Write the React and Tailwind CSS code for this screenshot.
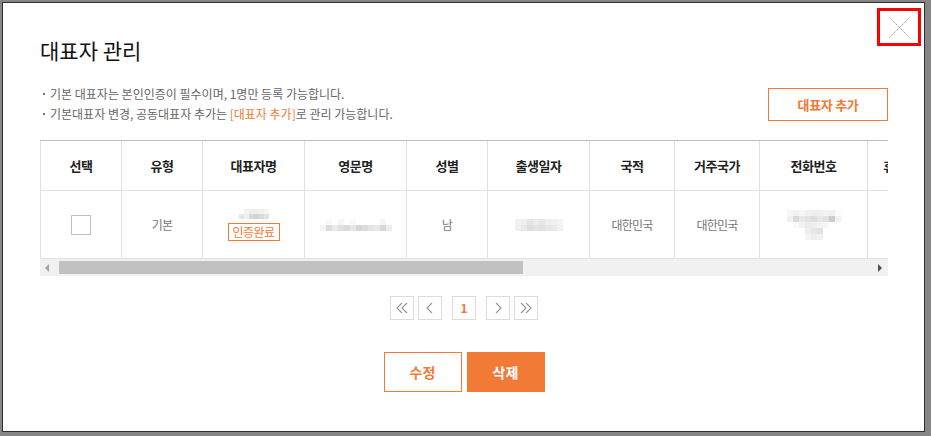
import React from 'react';

const FONT = { fontFamily: '"Noto Sans CJK KR", "Noto Sans", sans-serif' };

const COLUMNS = [
  { label: '선택', w: 'w-[81px]' },
  { label: '유형', w: 'w-[81px]' },
  { label: '대표자명', w: 'w-[102px]' },
  { label: '영문명', w: 'w-[102px]' },
  { label: '성별', w: 'w-[81px]' },
  { label: '출생일자', w: 'w-[102px]' },
  { label: '국적', w: 'w-[85px]' },
  { label: '거주국가', w: 'w-[85px]' },
  { label: '전화번호', w: 'w-[108px]' },
  { label: '휴대폰', w: 'w-[66px]' }
];

// 모자이크 처리된 개인정보 (픽셀 블록)
const Mosaic = ({ rows, size = 6 }) => (
  <div className="flex flex-col items-center">
    {rows.map((row, i) => (
      <div key={i} className="flex">
        {row.map((shade, j) => (
          <span key={j} style={{ width: size, height: size, background: shade }} />
        ))}
      </div>
    ))}
  </div>
);

const Chevron = ({ dir = 'left', double = false }) => (
  <svg width="14" height="14" viewBox="0 0 14 14" fill="none" stroke="#9a9a9a" strokeWidth="1.2">
    {dir === 'left' ? (
      <>
        <polyline points={double ? '7,2 2,7 7,12' : '9,2 4,7 9,12'} />
        {double && <polyline points="12,2 7,7 12,12" />}
      </>
    ) : (
      <>
        <polyline points={double ? '2,2 7,7 2,12' : '5,2 10,7 5,12'} />
        {double && <polyline points="7,2 12,7 7,12" />}
      </>
    )}
  </svg>
);

const PageBtn = ({ children, className = '' }) => (
  <button className={`flex h-[24px] w-[24px] items-center justify-center border border-[#dcdcdc] bg-white ${className}`}>
    {children}
  </button>
);

export default function App() {
  return (
    <div className="h-[436px] w-[931px] overflow-hidden bg-[#858585] pl-[2px] pt-[2px]" style={FONT}>
      <div className="relative h-[430px] w-[923px] border border-[#2f2f2f] bg-white pl-[37px] pr-[36px]">
        {/* 닫기 */}
        <div className="absolute right-[3px] top-[5px] flex h-[38px] w-[44px] items-center justify-center border-[3px] border-[#ff0000]">
          <svg width="21" height="21" viewBox="0 0 21 21" stroke="#a0a0a0" strokeWidth="1" strokeDasharray="1.5 0.8">
            <line x1="0.5" y1="0.5" x2="20.5" y2="20.5" />
            <line x1="20.5" y1="0.5" x2="0.5" y2="20.5" />
          </svg>
        </div>

        {/* Header */}
        <h1 className="mt-[32px] h-[30px] text-[21px] leading-[30px] font-normal text-[#111]">대표자 관리</h1>

        <div className="mt-[19px] flex items-start justify-between">
          <div className="text-[12px] leading-[20px] text-[#666]">
            <p className="flex items-center">
              <span className="ml-[3px] mr-[5px] inline-block h-[2px] w-[2px] bg-[#777]" />
              기본 대표자는 본인인증이 필수이며, 1명만 등록 가능합니다.
            </p>
            <p className="flex items-center">
              <span className="ml-[3px] mr-[5px] inline-block h-[2px] w-[2px] bg-[#777]" />
              기본대표자 변경, 공동대표자 추가는&nbsp;<span className="text-[#f17a36]">[대표자 추가]</span>로 관리 가능합니다.
            </p>
          </div>
          <button className="mt-[4px] h-[33px] w-[120px] border border-[#f17a36] bg-white text-[13px] font-bold tracking-[-0.3px] text-[#f17a36]">
            대표자 추가
          </button>
        </div>

        {/* Table */}
        <div className="mt-[16px] w-[848px] overflow-hidden border-t border-[#b9c0ca]">
          <div className="w-max border-l border-[#e2e2e2]">
            <div className="flex h-[50px] border-b border-[#e2e2e2]">
              {COLUMNS.map((c) => (
                <div
                  key={c.label}
                  className={`${c.w} flex shrink-0 items-center justify-center border-r border-[#e2e2e2] text-[13px] font-bold tracking-[-0.5px] text-[#222]`}
                >
                  {c.label}
                </div>
              ))}
            </div>
            <div className="flex h-[68px] border-b border-[#e2e2e2] text-[12px] tracking-[-0.75px] text-[#777]">
              <div className="flex w-[81px] shrink-0 items-center justify-center border-r border-[#e2e2e2]">
                <span className="h-[20px] w-[20px] border border-[#bcc1c9] bg-white" />
              </div>
              <div className="flex w-[81px] shrink-0 items-center justify-center border-r border-[#e2e2e2]">기본</div>
              <div className="flex w-[102px] shrink-0 flex-col items-center justify-center gap-[4px] border-r border-[#e2e2e2]">
                <Mosaic
                  size={5}
                  rows={[
                    ['#fff', '#f3f3f3', '#eee', '#eee', '#f0f0f0', '#f5f5f5'],
                    ['#e6e6e6', '#efefef', '#d8d8d8', '#d4d4d4', '#dadada', '#e2e2e2']
                  ]}
                />
                <span className="flex h-[18px] w-[52px] items-center justify-center border border-[#f17a36] text-[12px] tracking-[-0.5px] text-[#f17a36]">
                  인증완료
                </span>
              </div>
              <div className="flex w-[102px] shrink-0 items-center justify-center border-r border-[#e2e2e2]">
                <Mosaic
                  rows={[
                    ['#fff', '#fafafa', '#fff', '#f5f5f5', '#fff', '#fafafa', '#fff', '#fff', '#fff', '#fff', '#f5f5f5', '#fff'],
                    ['#f4f4f4', '#dcdcdc', '#eaeaea', '#e0e0e0', '#dadada', '#e6e6e6', '#d6d6d6', '#dcdcdc', '#e4e4e4', '#e8e8e8', '#d8d8d8', '#eeeeee']
                  ]}
                />
              </div>
              <div className="flex w-[81px] shrink-0 items-center justify-center border-r border-[#e2e2e2]">남</div>
              <div className="flex w-[102px] shrink-0 items-center justify-center border-r border-[#e2e2e2]">
                <Mosaic
                  rows={[
                    ['#f2f2f2', '#eeeeee', '#e4e4e4', '#ececec', '#e6e6e6', '#eeeeee', '#f0f0f0', '#f4f4f4'],
                    ['#f0f0f0', '#e8e8e8', '#dedede', '#e2e2e2', '#e0e0e0', '#e6e6e6', '#eaeaea', '#f2f2f2']
                  ]}
                />
              </div>
              <div className="flex w-[85px] shrink-0 items-center justify-center border-r border-[#e2e2e2]">대한민국</div>
              <div className="flex w-[85px] shrink-0 items-center justify-center border-r border-[#e2e2e2]">대한민국</div>
              <div className="flex w-[108px] shrink-0 items-center justify-center border-r border-[#e2e2e2]">
                <Mosaic
                  rows={[
                    ['#f8f8f8', '#f2f2f2', '#f6f6f6', '#f2f2f2', '#eeeeee', '#f0f0f0', '#f3f3f3', '#f0f0f0', '#fafafa'],
                    ['#f0f0f0', '#dadada', '#e8e8e8', '#e2e2e2', '#dedede', '#e6e6e6', '#e0e0e0', '#cccccc', '#f2f2f2'],
                    ['#fff', '#fafafa', '#f4f4f4', '#ececec', '#f0f0f0', '#f2f2f2', '#f6f6f6', '#fff', '#fff'],
                    ['#fff', '#fff', '#fff', '#eeeeee', '#e6e6e6', '#e2e2e2', '#fff', '#fff', '#fff'],
                    ['#fff', '#fff', '#fff', '#f4f4f4', '#eeeeee', '#f0f0f0', '#fff', '#fff', '#fff']
                  ]}
                />
              </div>
              <div className="w-[66px] shrink-0 border-r border-[#e2e2e2]" />
            </div>
          </div>
          {/* Scrollbar */}
          <div className="flex h-[17px] items-center bg-[#f1f1f1]">
            <span className="ml-[5px] mr-[10px] h-0 w-0 border-y-[4px] border-r-[4px] border-y-transparent border-r-[#a3a3a3]" />
            <span className="h-[13px] w-[464px] bg-[#c1c1c1]" />
            <span className="ml-auto mr-[6px] h-0 w-0 border-y-[4px] border-l-[4px] border-y-transparent border-l-[#505050]" />
          </div>
        </div>

        {/* Pagination */}
        <div className="mt-[20px] flex items-center justify-center">
          <PageBtn><Chevron dir="left" double /></PageBtn>
          <PageBtn className="ml-[4px]"><Chevron dir="left" /></PageBtn>
          <PageBtn className="ml-[10px] text-[12px] font-bold text-[#f17a36]">1</PageBtn>
          <PageBtn className="ml-[10px]"><Chevron dir="right" /></PageBtn>
          <PageBtn className="ml-[4px]"><Chevron dir="right" double /></PageBtn>
        </div>

        {/* Actions */}
        <div className="mt-[32px] flex justify-center gap-[5px]">
          <button className="h-[40px] w-[78px] border border-[#f17a36] bg-white text-[14px] font-bold text-[#f17a36]">수정</button>
          <button className="h-[40px] w-[78px] bg-[#f17a36] text-[14px] font-bold text-white">삭제</button>
        </div>
      </div>
    </div>
  );
}
